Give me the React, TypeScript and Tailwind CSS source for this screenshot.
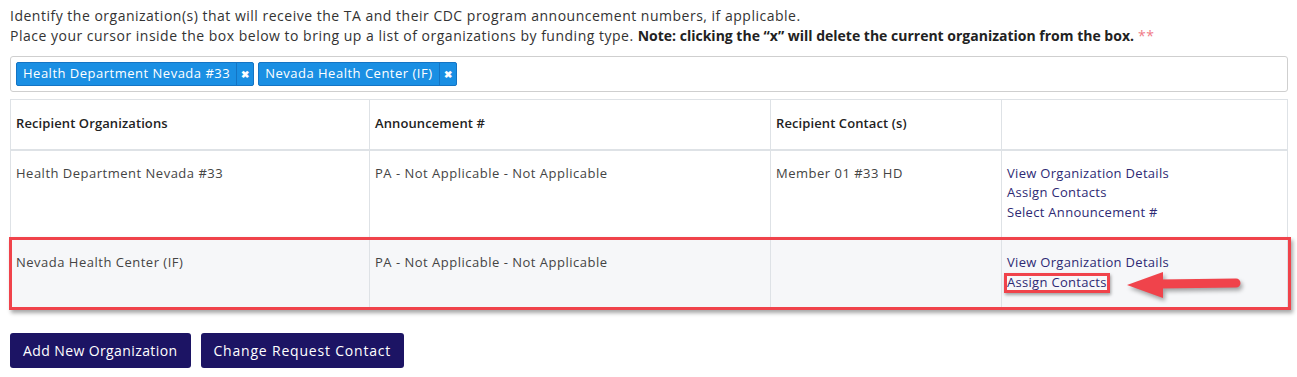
import React from "react";

const font = { fontFamily: '"Open Sans", "Liberation Sans", sans-serif' };

function Tag({ label }: { label: string }) {
  return (
    <span className="inline-flex h-[24px] items-stretch rounded-[2px] border border-[#1474c4] bg-[#1a8fe3] text-[13px] text-white">
      <span className="flex items-center px-[6px]">{label}</span>
      <span className="flex w-[17px] items-center justify-center border-l border-[#1474c4] text-[10px] font-bold tracking-normal">✖</span>
    </span>
  );
}

function Links({ items }: { items: string[] }) {
  return (
    <div className="flex flex-col">
      {items.map((t) => (
        <a key={t} className="leading-[19.5px] text-[#2e2a74]">
          {t}
        </a>
      ))}
    </div>
  );
}

export default function App() {
  return (
    <div className="bg-white pt-[6px] pl-[10px] pr-[9px] text-[14px] tracking-[0.5px] text-[#333]" style={font}>
      <p className="leading-[20px]">
        Identify the organization(s) that will receive the TA and their CDC program announcement numbers, if applicable.
      </p>
      <p className="leading-[20px]">
        Place your cursor inside the box below to bring up a list of organizations by funding type.{" "}
        <b className="font-bold tracking-normal text-[#222]">Note: clicking the “x” will delete the current organization from the box.</b>{" "}
        <span className="text-[#f07b87]">**</span>
      </p>
      <div className="mt-[10px] flex h-[36px] items-center gap-[4px] rounded-[3px] border border-[#cfcfcf] px-[5px]">
        <Tag label="Health Department Nevada #33" />
        <Tag label="Nevada Health Center (IF)" />
      </div>

      <div className="relative mt-[7px]">
        <table className="w-full border-collapse text-[13px]">
          <colgroup>
            <col className="w-[359px]" />
            <col className="w-[401px]" />
            <col className="w-[231px]" />
            <col />
          </colgroup>
          <thead>
            <tr className="h-[50px] border-b-2 border-[#dee2e6]">
              {["Recipient Organizations", "Announcement #", "Recipient Contact (s)", ""].map((h, i) => (
                <th key={i} className="border border-b-2 border-[#dee2e6] px-[5px] pb-[2px] text-left align-middle font-semibold tracking-[0.1px] text-[#222]">
                  {h}
                </th>
              ))}
            </tr>
          </thead>
          <tbody className="text-[#444]">
            <tr className="h-[88px]">
              <td className="border border-[#dee2e6] px-[5px] pt-[13px] align-top leading-[19.5px]">Health Department Nevada #33</td>
              <td className="border border-[#dee2e6] px-[5px] pt-[13px] align-top leading-[19.5px]">PA - Not Applicable - Not Applicable</td>
              <td className="border border-[#dee2e6] px-[5px] pt-[13px] align-top leading-[19.5px]">Member 01 #33 HD</td>
              <td className="border border-[#dee2e6] px-[5px] pt-[13px] align-top tracking-[0.3px]">
                <Links items={["View Organization Details", "Assign Contacts", "Select Announcement #"]} />
              </td>
            </tr>
            <tr className="h-[70px] bg-[#f6f7f9]">
              <td className="border border-[#dee2e6] px-[5px] pt-[15px] align-top leading-[19.5px]">Nevada Health Center (IF)</td>
              <td className="border border-[#dee2e6] px-[5px] pt-[15px] align-top leading-[19.5px]">PA - Not Applicable - Not Applicable</td>
              <td className="border border-[#dee2e6] px-[5px] pt-[15px] align-top"></td>
              <td className="border border-[#dee2e6] px-[5px] pt-[15px] align-top tracking-[0.3px]">
                <div className="flex flex-col">
                  <a className="leading-[19.5px] text-[#2e2a74]">View Organization Details</a>
                  <a className="relative w-fit leading-[19.5px] text-[#2e2a74]">
                    Assign Contacts
                    <span className="pointer-events-none absolute -left-[3px] -right-[3px] top-[0px] bottom-[-1px] border-[3px] border-[#f0434b] shadow-[1px_2px_3px_rgba(0,0,0,0.35)]" />
                  </a>
                </div>
              </td>
            </tr>
          </tbody>
        </table>

        {/* red highlight annotation */}
        <div className="pointer-events-none absolute left-[-1px] right-[-3px] top-[138px] h-[73px] border-[3px] border-[#f0434b] shadow-[2px_3px_4px_rgba(0,0,0,0.35)]" />
        {/* arrow annotation */}
        <svg className="pointer-events-none absolute left-[1105px] top-[170px]" width="140" height="34" viewBox="0 0 140 34" style={{ filter: "drop-shadow(2px 3px 2px rgba(0,0,0,0.35))" }}>
          <line x1="44" y1="15" x2="121" y2="14" stroke="#f0434b" strokeWidth="9" strokeLinecap="round" />
          <polygon points="12,16 48,3 48,29" fill="#f0434b" />
        </svg>
      </div>

      <div className="mt-[25px] flex gap-[10px] pb-[8px]">
        <button className="h-[35px] rounded-[3px] bg-[#1c1464] px-[13px] text-[14px] tracking-[0.4px] text-white">Add New Organization</button>
        <button className="h-[35px] rounded-[3px] bg-[#1c1464] px-[13px] text-[14px] tracking-[0.8px] text-white">Change Request Contact</button>
      </div>
    </div>
  );
}
